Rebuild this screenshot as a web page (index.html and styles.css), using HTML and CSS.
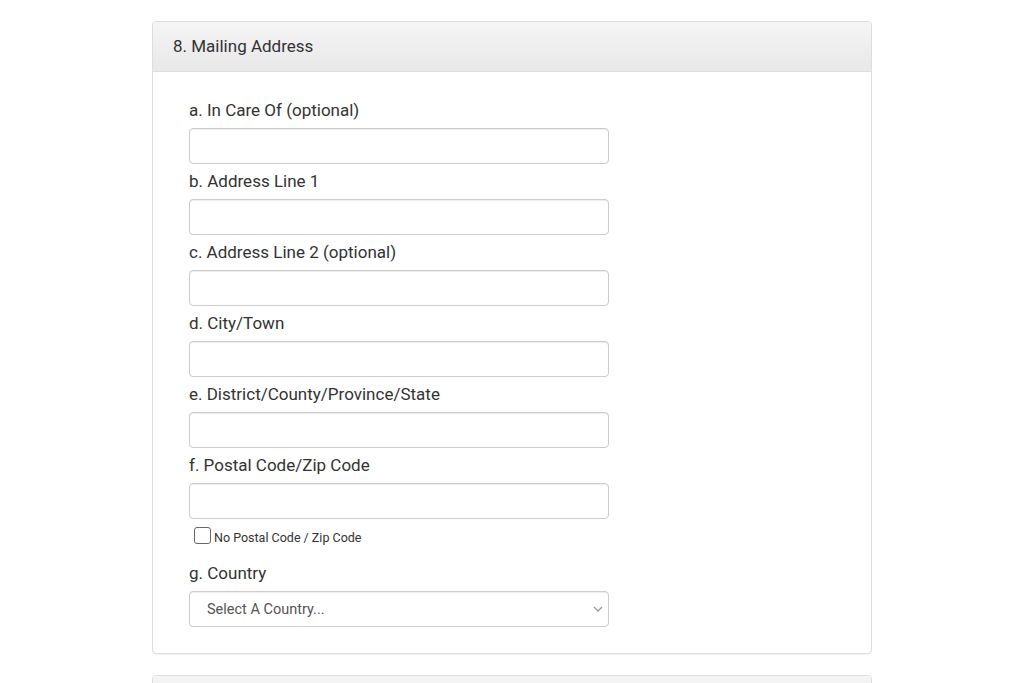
FILE: index.html
```html
<!DOCTYPE html>
<html lang="en">
<head>
  <meta charset="UTF-8">
  <title>Mailing Address</title>
  <link rel="stylesheet" href="styles.css">
</head>
<body>

  <div class="page">
    <div class="panel">
      <div class="panel-heading">8. Mailing Address</div>
      <div class="panel-body">

        <div class="field">
          <label for="careof">a. In Care Of (optional)</label>
          <input type="text" id="careof">
        </div>

        <div class="field">
          <label for="line1">b. Address Line 1</label>
          <input type="text" id="line1">
        </div>

        <div class="field">
          <label for="line2">c. Address Line 2 (optional)</label>
          <input type="text" id="line2">
        </div>

        <div class="field">
          <label for="city">d. City/Town</label>
          <input type="text" id="city">
        </div>

        <div class="field">
          <label for="state">e. District/County/Province/State</label>
          <input type="text" id="state">
        </div>

        <div class="field">
          <label for="zip">f. Postal Code/Zip Code</label>
          <input type="text" id="zip">
          <label class="check"><input type="checkbox" id="nozip">No Postal Code / Zip Code</label>
        </div>

        <div class="field field-last">
          <label for="country">g. Country</label>
          <div class="select-wrap">
            <select id="country">
              <option>Select A Country...</option>
            </select>
            <svg class="chevron" width="10" height="6" viewBox="0 0 10 6">
              <path d="M1 1l4 4 4-4" fill="none" stroke="#999" stroke-width="1.3"/>
            </svg>
          </div>
        </div>

      </div>
    </div>

    <div class="panel">
      <div class="panel-heading"></div>
    </div>
  </div>

</body>
</html>
```

FILE: styles.css
```css
* {
  box-sizing: border-box;
  margin: 0;
  padding: 0;
}

body {
  font-family: Roboto, 'Liberation Sans', Arial, sans-serif;
  background: #fff;
  color: #333;
}

.page {
  width: 720px;
  margin: 21px auto 0;
}

.panel {
  border: 1px solid #ddd;
  border-radius: 4px;
  margin-bottom: 21px;
  background: #fff;
  box-shadow: 0 1px 1px rgba(0, 0, 0, 0.05);
}

.panel-heading {
  height: 50px;
  line-height: 48px;
  padding: 0 20px;
  font-size: 17px;
  color: #333;
  background: linear-gradient(to bottom, #f5f5f5, #e8e8e8);
  border-bottom: 1px solid #ddd;
  border-radius: 3px 3px 0 0;
}

.panel-body {
  padding: 28px 36px 26px;
}

.field {
  display: flex;
  flex-direction: column;
  width: 420px;
  margin-bottom: 7px;
}

.field-last {
  margin-bottom: 0;
}

.field > label {
  font-size: 17px;
  line-height: 20px;
  margin-bottom: 8px;
  color: #333;
}

input[type="text"],
select {
  width: 420px;
  height: 36px;
  border: 1px solid #ccc;
  border-radius: 4px;
  background: #fff;
  box-shadow: inset 0 1px 1px rgba(0, 0, 0, 0.075);
  font-family: inherit;
  font-size: 14.5px;
  color: #555;
  padding: 6px 12px;
}

.field > .check {
  display: flex;
  align-items: flex-end;
  height: 17px;
  margin: 8px 0 12px 5px;
  font-size: 12.5px;
  line-height: 12px;
  color: #333;
}

.check input {
  flex: none;
  width: 17px;
  height: 17px;
  margin-right: 3px;
  appearance: none;
  border: 1px solid #666;
  border-radius: 3px;
  background: #fff;
}

.select-wrap {
  position: relative;
}

select {
  appearance: none;
  padding-left: 17px;
}

.chevron {
  position: absolute;
  right: 6px;
  top: 15px;
  pointer-events: none;
}
```
